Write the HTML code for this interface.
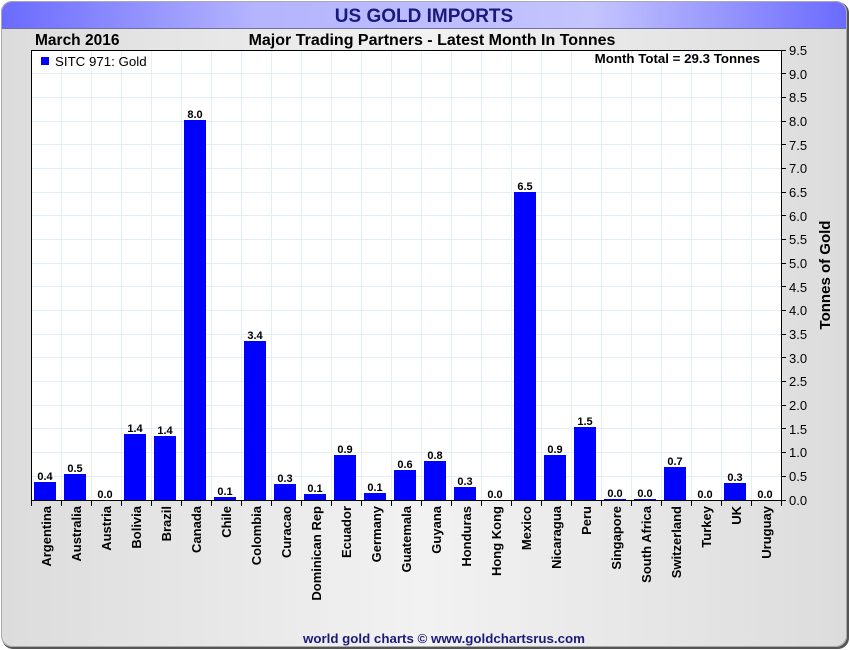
<!DOCTYPE html>
<html><head><meta charset="utf-8"><style>
html,body{margin:0;padding:0;width:850px;height:650px;overflow:hidden;background:#fff}
svg{display:block;font-family:"Liberation Sans",Arial,sans-serif}
</style></head><body>
<svg width="850" height="650" viewBox="0 0 850 650" xmlns="http://www.w3.org/2000/svg">
<defs>
<linearGradient id="bg" x1="0" x2="1" y1="0" y2="0"><stop offset="0" stop-color="#dcdcdc"/><stop offset="0.5" stop-color="#f2f2f2"/><stop offset="1" stop-color="#dcdcdc"/></linearGradient>
<linearGradient id="tb" x1="0" x2="1" y1="0" y2="0"><stop offset="0" stop-color="#6a6aff"/><stop offset="0.3" stop-color="#b4b4ff"/><stop offset="0.7" stop-color="#c4c4ff"/><stop offset="1" stop-color="#6a6aff"/></linearGradient>
<clipPath id="fr"><rect x="1" y="1" width="846" height="646" rx="11"/></clipPath>
</defs>
<rect x="2" y="2" width="847" height="647" rx="11" fill="#555"/>
<g clip-path="url(#fr)">
<rect x="1" y="1" width="846" height="646" fill="url(#bg)"/>
<rect x="1" y="1" width="846" height="28" fill="url(#tb)"/>
<line x1="1" y1="28.5" x2="847" y2="28.5" stroke="#7070a0"/>
</g>
<rect x="1.5" y="1.5" width="845" height="645" rx="11" fill="none" stroke="#aaa"/>
<text x="424" y="22" text-anchor="middle" font-size="19" font-weight="bold" fill="#1a1a7a">US GOLD IMPORTS</text>
<text x="35" y="45" font-size="15.5" font-weight="bold" fill="#000">March 2016</text>
<text x="432" y="45" text-anchor="middle" font-size="16" font-weight="bold" fill="#000">Major Trading Partners - Latest Month In Tonnes</text>
<rect x="31" y="50" width="750" height="450" fill="#fff"/>
<g stroke="#e2eef8" stroke-width="1">
<path d="M61.5 50V500M91.5 50V500M121.5 50V500M151.5 50V500M181.5 50V500M211.5 50V500M241.5 50V500M271.5 50V500M301.5 50V500M331.5 50V500M361.5 50V500M391.5 50V500M421.5 50V500M451.5 50V500M481.5 50V500M511.5 50V500M541.5 50V500M571.5 50V500M601.5 50V500M631.5 50V500M661.5 50V500M691.5 50V500M721.5 50V500M751.5 50V500"/>
<path d="M31 73.5H781M31 97.5H781M31 121.5H781M31 144.5H781M31 168.5H781M31 192.5H781M31 215.5H781M31 239.5H781M31 263.5H781M31 286.5H781M31 310.5H781M31 334.5H781M31 357.5H781M31 381.5H781M31 405.5H781M31 428.5H781M31 452.5H781M31 476.5H781"/>
</g>
<rect x="31.5" y="50.5" width="750" height="450" fill="none" stroke="#000"/>
<rect x="41" y="57" width="8" height="8" fill="#0000ff"/>
<text x="55" y="66" font-size="13.3" fill="#000">SITC 971: Gold</text>
<text x="760" y="63" text-anchor="end" font-size="13.3" font-weight="bold" fill="#000">Month Total = 29.3 Tonnes</text>
<g fill="#0000ff">
<rect x="34" y="482" width="22" height="18"/>
<rect x="64" y="474" width="22" height="26"/>
<rect x="124" y="434" width="22" height="66"/>
<rect x="154" y="436" width="22" height="64"/>
<rect x="184" y="120" width="22" height="380"/>
<rect x="214" y="497" width="22" height="3"/>
<rect x="244" y="341" width="22" height="159"/>
<rect x="274" y="484" width="22" height="16"/>
<rect x="304" y="494" width="22" height="6"/>
<rect x="334" y="455" width="22" height="45"/>
<rect x="364" y="493" width="22" height="7"/>
<rect x="394" y="470" width="22" height="30"/>
<rect x="424" y="461" width="22" height="39"/>
<rect x="454" y="487" width="22" height="13"/>
<rect x="514" y="192" width="22" height="308"/>
<rect x="544" y="455" width="22" height="45"/>
<rect x="574" y="427" width="22" height="73"/>
<rect x="604" y="499" width="22" height="1"/>
<rect x="634" y="499" width="22" height="1"/>
<rect x="664" y="467" width="22" height="33"/>
<rect x="724" y="483" width="22" height="17"/>
</g>
<g font-size="11" font-weight="bold" text-anchor="middle" fill="#000">
<text x="45" y="480">0.4</text><text x="75" y="472">0.5</text><text x="105" y="498">0.0</text>
<text x="135" y="432">1.4</text><text x="165" y="434">1.4</text><text x="195" y="118">8.0</text>
<text x="225" y="495">0.1</text><text x="255" y="339">3.4</text><text x="285" y="482">0.3</text>
<text x="315" y="492">0.1</text><text x="345" y="453">0.9</text><text x="375" y="491">0.1</text>
<text x="405" y="468">0.6</text><text x="435" y="459">0.8</text><text x="465" y="485">0.3</text>
<text x="495" y="498">0.0</text><text x="525" y="190">6.5</text><text x="555" y="453">0.9</text>
<text x="585" y="425">1.5</text><text x="615" y="497">0.0</text><text x="645" y="497">0.0</text>
<text x="675" y="465">0.7</text><text x="705" y="498">0.0</text><text x="735" y="481">0.3</text>
<text x="765" y="498">0.0</text>
</g>
<g stroke="#000">
<path d="M31.5 500V506M61.5 500V506M91.5 500V506M121.5 500V506M151.5 500V506M181.5 500V506M211.5 500V506M241.5 500V506M271.5 500V506M301.5 500V506M331.5 500V506M361.5 500V506M391.5 500V506M421.5 500V506M451.5 500V506M481.5 500V506M511.5 500V506M541.5 500V506M571.5 500V506M601.5 500V506M631.5 500V506M661.5 500V506M691.5 500V506M721.5 500V506M751.5 500V506M781.5 500V506"/>
<path d="M781 50.5H786M781 73.5H786M781 97.5H786M781 121.5H786M781 144.5H786M781 168.5H786M781 192.5H786M781 215.5H786M781 239.5H786M781 263.5H786M781 286.5H786M781 310.5H786M781 334.5H786M781 357.5H786M781 381.5H786M781 405.5H786M781 428.5H786M781 452.5H786M781 476.5H786M781 500.5H786"/>
</g>
<g font-size="13" fill="#000">
<text x="789" y="55">9.5</text><text x="789" y="79">9.0</text><text x="789" y="102">8.5</text><text x="789" y="126">8.0</text>
<text x="789" y="150">7.5</text><text x="789" y="173">7.0</text><text x="789" y="197">6.5</text><text x="789" y="221">6.0</text>
<text x="789" y="244">5.5</text><text x="789" y="268">5.0</text><text x="789" y="292">4.5</text><text x="789" y="315">4.0</text>
<text x="789" y="339">3.5</text><text x="789" y="363">3.0</text><text x="789" y="386">2.5</text><text x="789" y="410">2.0</text>
<text x="789" y="434">1.5</text><text x="789" y="457">1.0</text><text x="789" y="481">0.5</text><text x="789" y="505">0.0</text>
</g>
<text transform="translate(830,275) rotate(-90)" text-anchor="middle" font-size="15" font-weight="bold" fill="#000">Tonnes of Gold</text>
<g font-size="13" font-weight="bold" fill="#000" text-anchor="end">
<text transform="translate(51,506) rotate(-90)">Argentina</text>
<text transform="translate(81,506) rotate(-90)">Australia</text>
<text transform="translate(111,506) rotate(-90)">Austria</text>
<text transform="translate(141,506) rotate(-90)">Bolivia</text>
<text transform="translate(171,506) rotate(-90)">Brazil</text>
<text transform="translate(201,506) rotate(-90)">Canada</text>
<text transform="translate(231,506) rotate(-90)">Chile</text>
<text transform="translate(261,506) rotate(-90)">Colombia</text>
<text transform="translate(291,506) rotate(-90)">Curacao</text>
<text transform="translate(321,506) rotate(-90)">Dominican Rep</text>
<text transform="translate(351,506) rotate(-90)">Ecuador</text>
<text transform="translate(381,506) rotate(-90)">Germany</text>
<text transform="translate(411,506) rotate(-90)">Guatemala</text>
<text transform="translate(441,506) rotate(-90)">Guyana</text>
<text transform="translate(471,506) rotate(-90)">Honduras</text>
<text transform="translate(501,506) rotate(-90)">Hong Kong</text>
<text transform="translate(531,506) rotate(-90)">Mexico</text>
<text transform="translate(561,506) rotate(-90)">Nicaragua</text>
<text transform="translate(591,506) rotate(-90)">Peru</text>
<text transform="translate(621,506) rotate(-90)">Singapore</text>
<text transform="translate(651,506) rotate(-90)">South Africa</text>
<text transform="translate(681,506) rotate(-90)">Switzerland</text>
<text transform="translate(711,506) rotate(-90)">Turkey</text>
<text transform="translate(741,506) rotate(-90)">UK</text>
<text transform="translate(771,506) rotate(-90)">Uruguay</text>
</g>
<text x="444" y="643" text-anchor="middle" font-size="13.3" font-weight="bold" fill="#1a1a7a">world gold charts © www.goldchartsrus.com</text>
</svg>
</body></html>
